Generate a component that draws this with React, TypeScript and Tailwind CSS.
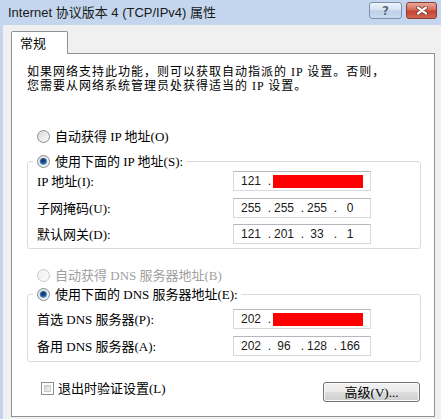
import React, { Fragment } from "react";

const CJK = "font-['Liberation_Serif','Noto_Sans_CJK_SC',serif]";

function Radio({ checked, disabled }: { checked?: boolean; disabled?: boolean }) {
  const id = checked ? "rc" : disabled ? "rd" : "rn";
  return (
    <svg width="13" height="13" viewBox="0 0 13 13" className="shrink-0">
      <defs>
        <linearGradient id={id + "bg"} x1="0" y1="0" x2="1" y2="1">
          <stop offset="0" stopColor={disabled ? "#eeeeee" : "#d9d9d9"} />
          <stop offset="1" stopColor="#fbfbfb" />
        </linearGradient>
        <radialGradient id={id + "dot"} cx="0.45" cy="0.4" r="0.6">
          <stop offset="0" stopColor="#0f2f5c" />
          <stop offset="0.55" stopColor="#1b5595" />
          <stop offset="1" stopColor="#7fb4e6" />
        </radialGradient>
      </defs>
      <circle cx="6.5" cy="6.5" r="6" fill={`url(#${id}bg)`} stroke={disabled ? "#c8c8c8" : "#8c8c8c"} />
      {checked && <circle cx="6.5" cy="6.5" r="3.6" fill={`url(#${id}dot)`} />}
    </svg>
  );
}

function Checkbox() {
  return (
    <div className="w-[13px] h-[13px] border border-[#8f8f8f] bg-white p-[2px] shrink-0">
      <div className="w-full h-full bg-[linear-gradient(135deg,#d4d4d4,#f4f4f4)] border border-[#c8c8c8]" />
    </div>
  );
}

function IpFields({ parts }: { parts: string[] }) {
  return (
    <>
      {parts.map((p, i) => (
        <Fragment key={i}>
          <span className="w-[26px] text-center">{p}</span>
          {i < 3 && <span className="w-[7px] text-right">.</span>}
        </Fragment>
      ))}
    </>
  );
}

function Redacted({ first }: { first: string }) {
  return (
    <>
      <span className="w-[26px] text-center">{first}</span>
      <span className="w-[7px] text-right">.</span>
      <div className="ml-[2px] w-[90px] h-[13px] bg-[#ff0000]" />
    </>
  );
}

function Row({ label, children, className }: { label: string; children: React.ReactNode; className?: string }) {
  return (
    <div className={"flex items-center h-[20px] pl-[9px] " + (className ?? "")}>
      <span className="w-[196px] whitespace-nowrap text-[13px] leading-[13px] text-black">{label}</span>
      <div className="w-[138px] h-[20px] border border-[#d6d9de] border-t-[#b4b8be] bg-white flex items-center pl-[4px] font-['Liberation_Sans',sans-serif] text-[12px] leading-[12px] text-[#1a1a1a]">
        {children}
      </div>
    </div>
  );
}

export default function App() {
  return (
    <div className={"w-[441px] h-[419px] flex flex-col bg-[#c3d6ed] overflow-hidden " + CJK}>
      {/* title bar */}
      <div className="h-[25px] flex items-start shrink-0">
        <div className="pl-[8px] h-[25px] flex items-center font-['Liberation_Sans','Noto_Sans_CJK_SC',sans-serif] text-[13px] text-[#1a1a1a] whitespace-nowrap">
          Internet 协议版本 4 (TCP/IPv4) 属性
        </div>
        <div className="ml-auto mr-[4px] mt-[2px] flex gap-[4px]">
          <div className="w-[33px] h-[17px] rounded-[3px] border border-[#7d91ab] bg-[linear-gradient(#eef4fb,#d3e1f2_48%,#bcd0e9_52%,#c9dbef)] flex items-center justify-center">
            <span className="font-['DejaVu_Sans',sans-serif] text-[12px] leading-[12px] font-bold text-[#55687f] [text-shadow:0_0_1px_#ffffff]">?</span>
          </div>
          <div className="w-[31px] h-[17px] rounded-[3px] border border-[#8b3b30] bg-[linear-gradient(#e9ab9f,#d46a58_45%,#c4442f_55%,#d0654f)] flex items-center justify-center">
            <svg width="12" height="9" viewBox="0 0 12 9">
              <path d="M2 1.5 L10 7.5 M10 1.5 L2 7.5" stroke="#6b2a22" strokeWidth="3.6" strokeLinecap="round" />
              <path d="M2 1.5 L10 7.5 M10 1.5 L2 7.5" stroke="#ffffff" strokeWidth="2.2" strokeLinecap="round" />
            </svg>
          </div>
        </div>
      </div>

      {/* body */}
      <div className="flex-1 ml-[3px] bg-[#f0f0f0] pl-[8px] pt-[6px]">
        {/* tab */}
        <div className="relative z-10 w-[57px] h-[23px] -mb-px border border-b-0 border-[#8e9297] rounded-t-[2px] bg-white flex items-center pl-[8px] text-[13px] leading-[13px] text-black">
          常规
        </div>
        {/* panel */}
        <div className="w-[424px] h-[364px] border border-[#8e9297] bg-white flex flex-col text-[13px] text-black">
          <div className="mt-[12px] ml-[15px] text-[12px] leading-[13.5px] tracking-[1px] whitespace-nowrap">
            如果网络支持此功能，则可以获取自动指派的 IP 设置。否则，
            <br />
            您需要从网络系统管理员处获得适当的 IP 设置。
          </div>

          <div className="mt-[35px] ml-[25px] h-[16px] flex items-center gap-[5px] whitespace-nowrap leading-[13px]">
            <Radio />
            <span>自动获得 IP 地址(O)</span>
          </div>

          <fieldset className="mt-[9px] ml-[15px] w-[394px] border border-[#d5dbe1] rounded-[3px] pt-[2px] pb-[4px]">
            <legend className="ml-[5px] pl-[4px] pr-[3px]">
              <div className="h-[16px] flex items-center gap-[5px] whitespace-nowrap leading-[13px]">
                <Radio checked />
                <span>使用下面的 IP 地址(S):</span>
              </div>
            </legend>
            <Row label="IP 地址(I):">
              <Redacted first="121" />
            </Row>
            <Row label="子网掩码(U):" className="mt-[7px]">
              <IpFields parts={["255", "255", "255", "0"]} />
            </Row>
            <Row label="默认网关(D):" className="mt-[6px]">
              <IpFields parts={["121", "201", "33", "1"]} />
            </Row>
          </fieldset>

          <div className="mt-[18px] ml-[25px] h-[16px] flex items-center gap-[5px] whitespace-nowrap leading-[13px] text-[#a0a0a0]">
            <Radio disabled />
            <span>自动获得 DNS 服务器地址(B)</span>
          </div>

          <fieldset className="mt-[3px] ml-[15px] w-[394px] border border-[#d5dbe1] rounded-[3px] pt-[7px] pb-[5px]">
            <legend className="ml-[5px] pl-[4px] pr-[3px]">
              <div className="h-[16px] flex items-center gap-[5px] whitespace-nowrap leading-[13px]">
                <Radio checked />
                <span>使用下面的 DNS 服务器地址(E):</span>
              </div>
            </legend>
            <Row label="首选 DNS 服务器(P):">
              <Redacted first="202" />
            </Row>
            <Row label="备用 DNS 服务器(A):" className="mt-[7px]">
              <IpFields parts={["202", "96", "128", "166"]} />
            </Row>
          </fieldset>

          <div className="mt-[20px] flex items-start">
            <div className="ml-[29px] h-[13px] flex items-center gap-[4px] whitespace-nowrap leading-[13px]">
              <Checkbox />
              <span>退出时验证设置(L)</span>
            </div>
            <button className="ml-auto mr-[14px] w-[97px] h-[20px] rounded-[3px] border border-[#707070] bg-[linear-gradient(#f2f2f2,#ebebeb_50%,#dddddd_50%,#cfcfcf)] flex items-center justify-center text-[13px] leading-[13px] text-black shadow-[inset_0_0_0_1px_#fcfcfc]">
              高级(V)...
            </button>
          </div>
        </div>
      </div>
    </div>
  );
}
